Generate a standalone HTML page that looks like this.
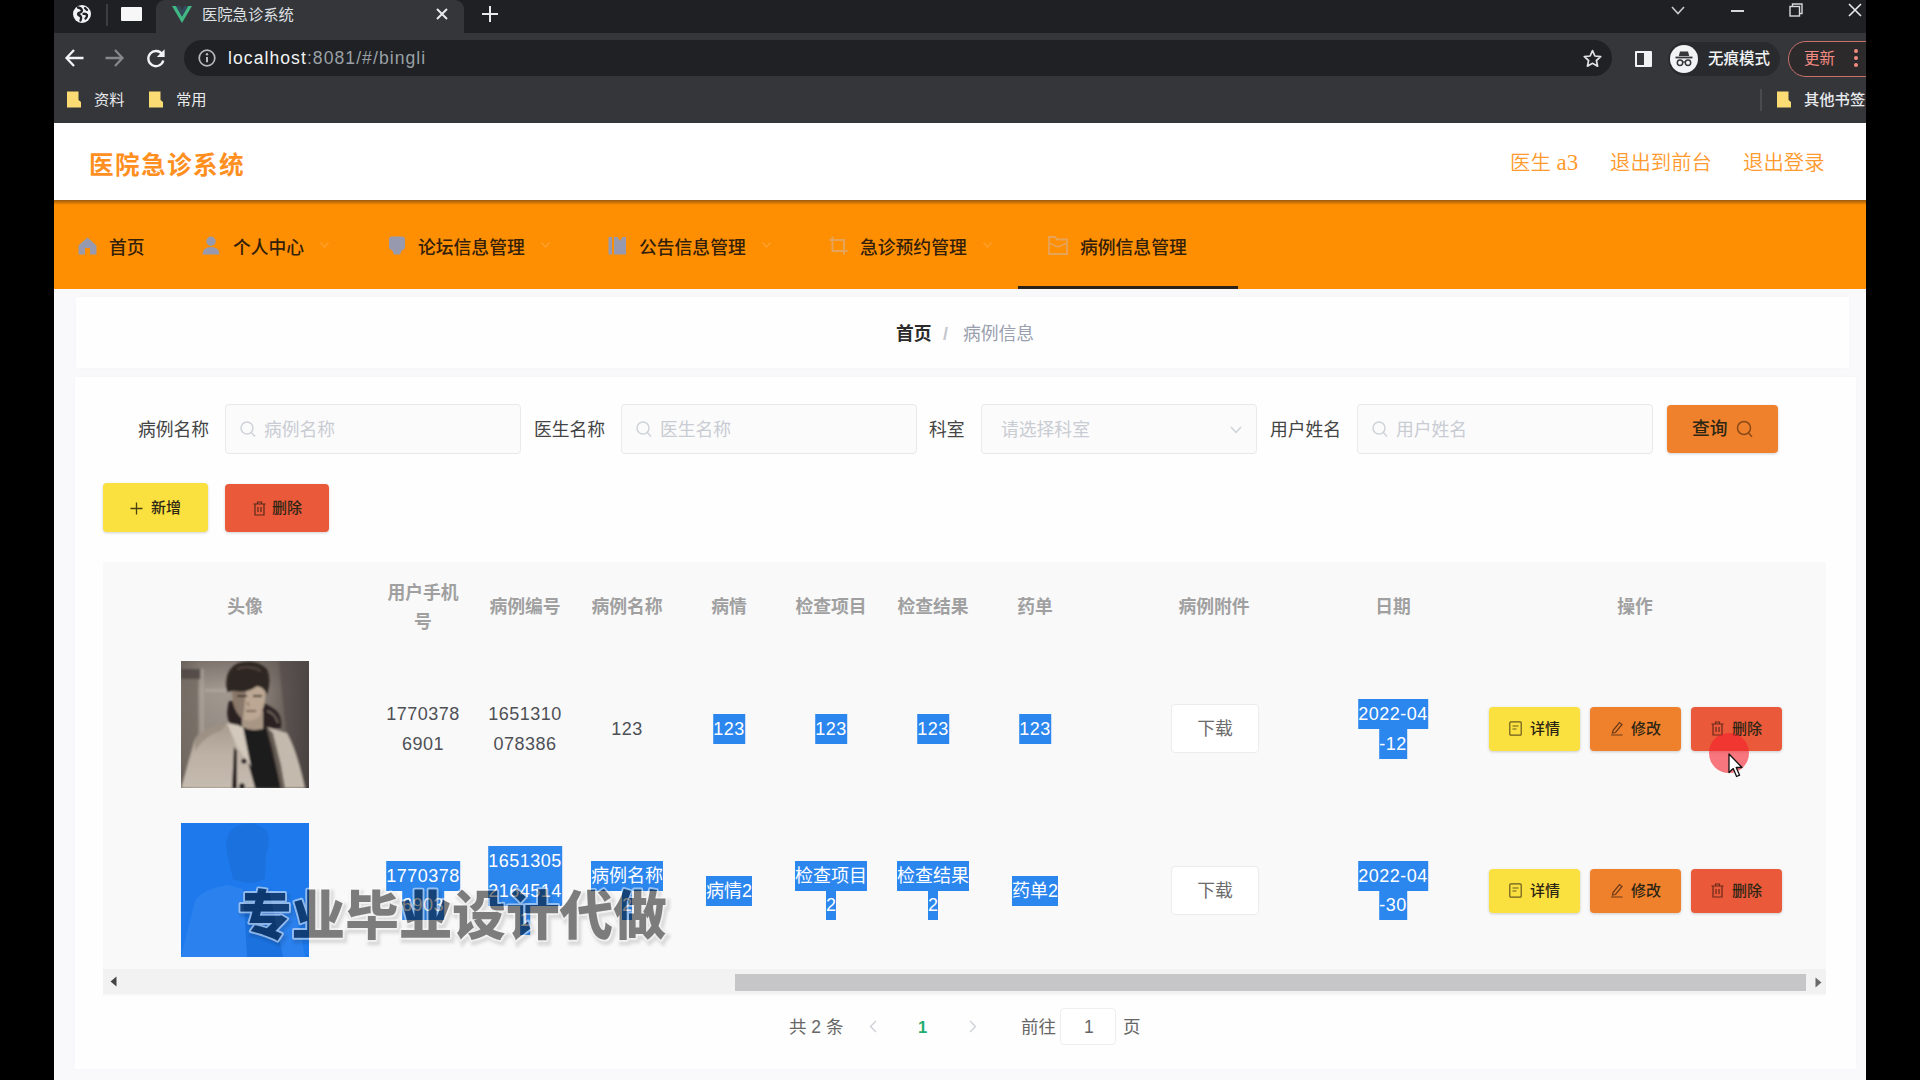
<!DOCTYPE html>
<html lang="zh-CN">
<head>
<meta charset="utf-8">
<title>医院急诊系统</title>
<style>
*{box-sizing:border-box;margin:0;padding:0}
html,body{width:1920px;height:1080px;overflow:hidden;background:#f9f9fb}
body{font-family:"Liberation Sans","Noto Sans CJK SC",sans-serif;position:relative;color:#333}
.a{position:absolute;white-space:nowrap}
.bar{position:absolute;top:0;width:54px;height:1080px;background:#000;z-index:50}
svg{position:absolute;overflow:visible}
/* browser chrome */
#tabstrip{position:absolute;left:0;top:0;width:1920px;height:34px;background:#1f2023}
#tab{position:absolute;left:156px;top:0;width:308px;height:34px;background:#35363a;border-radius:9px 9px 0 0}
#toolbar{position:absolute;left:0;top:33px;width:1920px;height:90px;background:#35363a}
#omni{position:absolute;left:184px;top:40px;width:1428px;height:36px;border-radius:18px;background:#202124}
.ct{color:#e8eaed;font-size:15.3px;line-height:20px}
/* app */
#hdr{position:absolute;left:0;top:123px;width:1920px;height:77px;background:#fff}
#nav{position:absolute;left:0;top:200px;width:1920px;height:89px;background:#ff8f02}
#navsh{position:absolute;left:0;top:200px;width:1920px;height:5px;background:linear-gradient(#9a5a10,rgba(255,140,0,0))}
.nv{position:absolute;top:202.5px;height:89px;line-height:90px;font-size:17.8px;color:#33200a;font-weight:500;white-space:nowrap}
.hl{position:absolute;top:146px;height:34px;line-height:34px;font-size:20.4px;color:#ff9a2e;font-weight:350;white-space:nowrap}
.card{position:absolute;background:#fefefe;box-shadow:0 0 6px rgba(0,0,0,.02)}
.lbl{position:absolute;top:405px;height:50px;line-height:50px;font-size:17.8px;color:#444;white-space:nowrap}
.inp{position:absolute;top:404px;height:50px;background:#fbfbfc;border:1px solid #e8e9ed;border-radius:4px;line-height:50px;font-size:17.8px;color:#c9ccd2;white-space:nowrap}
.btn{position:absolute;border-radius:4px;text-align:center;white-space:nowrap;color:#2e2614;font-weight:500}
.th{position:absolute;transform:translateX(-50%);text-align:center;font-size:17.8px;font-weight:bold;color:#a0a0a0;line-height:29px;white-space:nowrap}
.td{position:absolute;transform:translateX(-50%);text-align:center;font-size:18px;color:#4e5055;line-height:29.5px;white-space:nowrap}
.ab{width:91px;height:44px;line-height:44px;font-size:15px;text-align:left;padding-left:41px;box-shadow:0 1px 3px rgba(0,0,0,.18)}
.td span{display:inline-block;line-height:28.25px;padding-top:1px;padding-bottom:.8px;margin-bottom:-.8px;vertical-align:top}
.dg{letter-spacing:.5px}
.sel span{background:#2b86ee;color:#fff}
.pg{top:1012px;line-height:30px;font-size:17.5px;color:#666}
#wm{font-family:"Noto Sans CJK SC","Liberation Sans",sans-serif;font-weight:900;font-size:53.6px}
</style>
</head>
<body>
<!-- CHROME -->
<div id="tabstrip"></div>
<div id="toolbar"></div>
<div id="tab"></div>
<div id="omni"></div>
<!--CHROME-ITEMS-->
<!-- tab strip icons -->
<svg style="left:72px;top:4px" width="20" height="20" viewBox="0 0 20 20"><circle cx="10" cy="10" r="9" fill="#f1f3f4"/><path d="M6 3.500 Q9.500 4 10 6.500 Q9.500 8.500 7 8.800 Q5.500 9.500 6.500 11 Q9 11.500 9.200 14 L8.500 16.500 M11.500 9.800 Q14 9.500 15 11 Q15.500 13 13.500 14.500 M13 4 L15 6" stroke="#202124" stroke-width="2.300" fill="none" stroke-linecap="round"/></svg>
<div class="a" style="left:106px;top:4px;width:2px;height:22px;background:#3c3d41"></div>
<div class="a" style="left:121px;top:7px;width:21px;height:14px;background:#f7f7f7;border-radius:1px"></div>
<svg style="left:172px;top:6px" width="20" height="17" viewBox="0 0 20 17"><path d="M0 0 L10 17 L20 0 L16 0 L10 10.4 L4 0 Z" fill="#41b883"/><path d="M4 0 L10 10.4 L16 0 L12.3 0 L10 4 L7.7 0 Z" fill="#35495e"/></svg>
<div class="a ct" style="left:202px;top:5px;color:#dfe1e5;letter-spacing:0">医院急诊系统</div>
<svg style="left:436px;top:8px" width="12" height="12" viewBox="0 0 12 12"><path d="M1 1 L11 11 M11 1 L1 11" stroke="#e8eaed" stroke-width="2"/></svg>
<svg style="left:482px;top:6px" width="16" height="16" viewBox="0 0 16 16"><path d="M8 0 V16 M0 8 H16" stroke="#e8eaed" stroke-width="2"/></svg>
<!-- window controls -->
<svg style="left:1671px;top:6px" width="14" height="9" viewBox="0 0 14 9"><path d="M1 1 L7 7.5 L13 1" stroke="#c8cacd" stroke-width="1.6" fill="none"/></svg>
<div class="a" style="left:1731px;top:10px;width:13px;height:2px;background:#d5d7da"></div>
<svg style="left:1789px;top:3px" width="14" height="14" viewBox="0 0 14 14"><path d="M3.5 3.5 V1 H13 V10.5 H10.5" stroke="#d5d7da" stroke-width="1.4" fill="none"/><rect x="1" y="3.5" width="9.5" height="9.5" stroke="#d5d7da" stroke-width="1.4" fill="none"/></svg>
<svg style="left:1848px;top:3px" width="14" height="14" viewBox="0 0 14 14"><path d="M1 1 L13 13 M13 1 L1 13" stroke="#e8eaed" stroke-width="1.6"/></svg>
<!-- toolbar -->
<svg style="left:65px;top:49px" width="19" height="18" viewBox="0 0 19 18"><path d="M9 1 L1.5 9 L9 17 M1.5 9 H18.5" stroke="#f1f3f4" stroke-width="2.3" fill="none"/></svg>
<svg style="left:105px;top:49px" width="19" height="18" viewBox="0 0 19 18"><path d="M10 1 L17.5 9 L10 17 M17.5 9 H0.5" stroke="#85878b" stroke-width="2.3" fill="none"/></svg>
<svg style="left:146px;top:48px" width="20" height="20" viewBox="0 0 20 20"><path d="M16.2 6.2 A7.6 7.6 0 1 0 17.3 12.5" stroke="#f1f3f4" stroke-width="2.4" fill="none"/><path d="M18.6 1.2 V9 H10.8 Z" fill="#f1f3f4"/></svg>
<svg style="left:198px;top:49px" width="18" height="18" viewBox="0 0 18 18"><circle cx="9" cy="9" r="7.8" stroke="#b6b8bb" stroke-width="1.7" fill="none"/><path d="M9 8 V13.2" stroke="#b6b8bb" stroke-width="2"/><circle cx="9" cy="5.2" r="1.2" fill="#b6b8bb"/></svg>
<div class="a" style="left:228px;top:46px;font-size:17.6px;line-height:24px;color:#f1f3f4;letter-spacing:1.05px">localhost<span style="color:#9aa0a6">:8081/#/bingli</span></div>
<svg style="left:1583px;top:49px" width="19" height="19" viewBox="0 0 19 19"><path d="M9.5 1.6 L11.9 7 L17.7 7.6 L13.4 11.5 L14.6 17.2 L9.5 14.3 L4.4 17.2 L5.6 11.5 L1.3 7.6 L7.1 7 Z" stroke="#e0e2e5" stroke-width="1.7" fill="none" stroke-linejoin="round"/></svg>
<div class="a" style="left:1635px;top:51px;width:17px;height:16px;border:2px solid #f1f3f4;border-radius:1px;background:linear-gradient(90deg,#35363a 50%,#f1f3f4 50%)"></div>
<div class="a" style="left:1668px;top:42px;width:112px;height:34px;border-radius:17px;background:#292a2d"></div>
<div class="a" style="left:1670px;top:45px;width:28px;height:28px;border-radius:50%;background:#f1f3f4"></div>
<svg style="left:1675px;top:51px" width="18" height="16" viewBox="0 0 18 16"><path d="M5 0.5 H13 L14.2 5 H3.8 Z" fill="#35363a"/><rect x="0.5" y="5.6" width="17" height="1.8" fill="#35363a"/><circle cx="5" cy="11.7" r="2.7" stroke="#35363a" stroke-width="1.5" fill="none"/><circle cx="13" cy="11.7" r="2.7" stroke="#35363a" stroke-width="1.5" fill="none"/><path d="M7.5 11 H10.5" stroke="#35363a" stroke-width="1.3"/></svg>
<div class="a ct" style="left:1708px;top:49px;font-size:15.5px;font-weight:500;color:#f1f3f4">无痕模式</div>
<div class="a" style="left:1788px;top:41px;width:100px;height:36px;border:1.5px solid #c8716b;border-radius:18px;background:#2d2a2c"></div>
<div class="a ct" style="left:1804px;top:49px;font-size:15.5px;color:#f28b82">更新</div>
<div class="a" style="left:1854px;top:49px;width:4px;height:4px;border-radius:50%;background:#f28b82;box-shadow:0 7px 0 #f28b82,0 14px 0 #f28b82"></div>
<!-- bookmarks -->
<svg style="left:66px;top:91px" width="16" height="17" viewBox="0 0 16 17"><path d="M1 0.5 H12.5 V9 L15 11 V16.5 H1 Z" fill="#fbdc74"/></svg>
<div class="a ct" style="left:94px;top:90px">资料</div>
<svg style="left:148px;top:91px" width="16" height="17" viewBox="0 0 16 17"><path d="M1 0.5 H12.5 V9 L15 11 V16.5 H1 Z" fill="#fbdc74"/></svg>
<div class="a ct" style="left:176px;top:90px">常用</div>
<div class="a" style="left:1760px;top:89px;width:2px;height:22px;background:#4a4b4f"></div>
<svg style="left:1776px;top:91px" width="16" height="17" viewBox="0 0 16 17"><path d="M1 0.5 H12.5 V9 L15 11 V16.5 H1 Z" fill="#fbdc74"/></svg>
<div class="a ct" style="left:1804px;top:90px;font-weight:500">其他书签</div>
<!--/CHROME-ITEMS-->
<!-- APP -->
<div id="hdr"></div>
<div id="nav"></div>
<div id="navsh"></div>
<!--APP-ITEMS-->
<!-- header -->
<div class="a" style="left:89px;top:145.5px;font-size:24.6px;letter-spacing:1.4px;line-height:40px;font-weight:bold;color:#ff8f1f">医院急诊系统</div>
<div class="hl" style="left:1510px">医生 <span style="font-family:'Liberation Serif',serif;font-size:23px">a3</span></div>
<div class="hl" style="left:1610px">退出到前台</div>
<div class="hl" style="left:1743px">退出登录</div>
<!-- nav -->
<svg style="left:78px;top:237px" width="19" height="18" viewBox="0 0 19 18"><path d="M9.5 0.5 L18.5 8.5 V17.5 H12 V11 H7 V17.5 H0.5 V8.5 Z" fill="#9799ae"/></svg>
<div class="nv" style="left:109px">首页</div>
<svg style="left:202px;top:236px" width="18" height="19" viewBox="0 0 18 19"><circle cx="9" cy="5.2" r="4.7" fill="#9799ae"/><path d="M0.5 18.5 Q0.5 11 9 11 Q17.500 11 17.500 18.5 Z" fill="#9799ae"/></svg>
<div class="nv" style="left:233px">个人中心</div>
<svg style="left:388px;top:236px" width="18" height="19" viewBox="0 0 18 19"><rect x="1" y="0.5" width="16" height="13.5" rx="3" fill="#9799ae"/><path d="M4 14 H14 L12 18.500 H6 Z" fill="#9799ae"/></svg>
<div class="nv" style="left:418px">论坛信息管理</div>
<svg style="left:608px;top:236px" width="19" height="19" viewBox="0 0 19 19"><rect x="0.5" y="1" width="3.500" height="17.500" fill="#9799ae"/><path d="M6 1 H9.500 L12 5 L14.500 1 H18 V18.500 H6 Z" fill="#9799ae"/></svg>
<div class="nv" style="left:639px">公告信息管理</div>
<svg style="left:829px;top:236px" width="19" height="19" viewBox="0 0 19 19"><path d="M3.500 0.5 V15 H18.500 M0.5 4 H15 V18.500" stroke="#e6a45a" stroke-width="2" fill="none"/></svg>
<div class="nv" style="left:860px">急诊预约管理</div>
<svg style="left:1048px;top:236px" width="20" height="19" viewBox="0 0 20 19"><path d="M1 1 H7 L9 3.500 H19 V18 H1 Z" stroke="#e6a45a" stroke-width="1.8" fill="none"/><path d="M1 7 L10 11 L19 7" stroke="#e6a45a" stroke-width="1.500" fill="none"/></svg>
<div class="nv" style="left:1080px">病例信息管理</div>
<div class="a" style="left:1018px;top:286px;width:220px;height:3px;background:#2a2118"></div>
<svg style="left:320px;top:242px" width="9" height="6" viewBox="0 0 9 6"><path d="M0.5 0.5 L4.500 5 L8.500 0.5" stroke="rgba(255,205,150,.3)" stroke-width="1.200" fill="none"/></svg>
<svg style="left:541px;top:242px" width="9" height="6" viewBox="0 0 9 6"><path d="M0.5 0.5 L4.500 5 L8.500 0.5" stroke="rgba(255,205,150,.3)" stroke-width="1.200" fill="none"/></svg>
<svg style="left:762px;top:242px" width="9" height="6" viewBox="0 0 9 6"><path d="M0.5 0.5 L4.500 5 L8.500 0.5" stroke="rgba(255,205,150,.3)" stroke-width="1.200" fill="none"/></svg>
<svg style="left:983px;top:242px" width="9" height="6" viewBox="0 0 9 6"><path d="M0.5 0.5 L4.500 5 L8.500 0.5" stroke="rgba(255,205,150,.3)" stroke-width="1.200" fill="none"/></svg>
<!-- breadcrumb card -->
<div class="card" style="left:76px;top:297px;width:1773px;height:71px"></div>
<div class="a" style="left:896px;top:319px;font-size:17.8px;line-height:30px;font-weight:bold;color:#2b2b2b">首页</div>
<div class="a" style="left:943px;top:319px;font-size:17.8px;line-height:30px;color:#c3c6ce;font-weight:bold">/</div>
<div class="a" style="left:963px;top:319px;font-size:17.8px;line-height:30px;color:#9a9fae">病例信息</div>
<!-- main card -->
<div class="card" style="left:75px;top:377px;width:1781px;height:692px"></div>
<!-- search form -->
<div class="lbl" style="left:138px">病例名称</div>
<div class="inp" style="left:225px;width:296px"><svg style="left:14px;top:16px" width="16" height="17" viewBox="0 0 16 17"><circle cx="7" cy="7" r="6" stroke="#cfd2d8" stroke-width="1.500" fill="none"/><path d="M11.300 11.500 L15 15.500" stroke="#cfd2d8" stroke-width="1.500"/></svg><span style="margin-left:38px">病例名称</span></div>
<div class="lbl" style="left:534px">医生名称</div>
<div class="inp" style="left:621px;width:296px"><svg style="left:14px;top:16px" width="16" height="17" viewBox="0 0 16 17"><circle cx="7" cy="7" r="6" stroke="#cfd2d8" stroke-width="1.500" fill="none"/><path d="M11.300 11.500 L15 15.500" stroke="#cfd2d8" stroke-width="1.500"/></svg><span style="margin-left:38px">医生名称</span></div>
<div class="lbl" style="left:929px">科室</div>
<div class="inp" style="left:981px;width:276px"><span style="margin-left:19px">请选择科室</span><svg style="left:248px;top:21px" width="12" height="8" viewBox="0 0 12 8"><path d="M1 1 L6 6.500 L11 1" stroke="#cfd2d8" stroke-width="1.500" fill="none"/></svg></div>
<div class="lbl" style="left:1270px">用户姓名</div>
<div class="inp" style="left:1357px;width:296px"><svg style="left:14px;top:16px" width="16" height="17" viewBox="0 0 16 17"><circle cx="7" cy="7" r="6" stroke="#cfd2d8" stroke-width="1.500" fill="none"/><path d="M11.300 11.500 L15 15.500" stroke="#cfd2d8" stroke-width="1.500"/></svg><span style="margin-left:38px">用户姓名</span></div>
<div class="btn" style="left:1667px;top:405px;width:111px;height:48px;background:#f0812c;line-height:49px;font-size:17.8px;text-align:left;padding-left:25px;box-shadow:0 1px 3px rgba(0,0,0,.18)">查询<svg style="left:69px;top:15px" width="17" height="18" viewBox="0 0 17 18"><circle cx="8" cy="8" r="6.500" stroke="#8a4a18" stroke-width="1.500" fill="none"/><path d="M12.500 13 L16 16.800" stroke="#8a4a18" stroke-width="1.500"/></svg></div>
<!-- action buttons -->
<div class="btn" style="left:103px;top:483px;width:105px;height:49px;background:#fae13f;line-height:50px;font-size:15px;text-align:left;padding-left:48px;box-shadow:0 1px 3px rgba(0,0,0,.18)">新增<svg style="left:27px;top:19px" width="13" height="13" viewBox="0 0 13 13"><path d="M6.500 0.5 V12.500 M0.5 6.500 H12.500" stroke="#4a4010" stroke-width="1.300"/></svg></div>
<div class="btn" style="left:225px;top:484px;width:104px;height:48px;background:#e9593a;line-height:48px;font-size:15px;text-align:left;padding-left:47px;box-shadow:0 1px 3px rgba(0,0,0,.18)">删除<svg style="left:28px;top:17px" width="13" height="15" viewBox="0 0 13 15"><path d="M0.5 3 H12.500 M4.500 3 V1 H8.500 V3 M2 3 V14 H11 V3 M5 6 V11 M8 6 V11" stroke="#5a2a1a" stroke-width="1.200" fill="none"/></svg></div>
<!-- table -->
<div class="a" style="left:103px;top:562px;width:1723px;height:434px;background:#f9f9fa"></div>
<div class="th" style="left:245px;top:593.375px">头像</div>
<div class="th" style="left:423px;top:578.75px">用户手机<br>号</div>
<div class="th" style="left:525px;top:593.375px">病例编号</div>
<div class="th" style="left:627px;top:593.375px">病例名称</div>
<div class="th" style="left:729px;top:593.375px">病情</div>
<div class="th" style="left:831px;top:593.375px">检查项目</div>
<div class="th" style="left:933px;top:593.375px">检查结果</div>
<div class="th" style="left:1035px;top:593.375px">药单</div>
<div class="th" style="left:1214px;top:593.375px">病例附件</div>
<div class="th" style="left:1393px;top:593.375px">日期</div>
<div class="th" style="left:1635px;top:593.375px">操作</div>
<div class="td dg" style="left:423px;top:699.15px;"><span>1770378</span><br><span>6901</span></div>
<div class="td dg" style="left:525px;top:699.15px;"><span>1651310</span><br><span>078386</span></div>
<div class="td dg" style="left:627px;top:714.375px;"><span>123</span></div>
<div class="td sel dg" style="left:729px;top:714.375px;"><span>123</span></div>
<div class="td sel dg" style="left:831px;top:714.375px;"><span>123</span></div>
<div class="td sel dg" style="left:933px;top:714.375px;"><span>123</span></div>
<div class="td sel dg" style="left:1035px;top:714.375px;"><span>123</span></div>
<div class="td sel dg" style="left:1393px;top:699.15px;"><span>2022-04</span><br><span>-12</span></div>
<div class="td sel dg" style="left:423px;top:860.65px;"><span>1770378</span><br><span>6903</span></div>
<div class="td sel dg" style="left:525px;top:846.025px;"><span>1651305</span><br><span>2164514</span><br><span>1</span></div>
<div class="td sel" style="left:627px;top:860.65px;"><span>病例名称</span><br><span>2</span></div>
<div class="td sel" style="left:729px;top:875.875px;"><span>病情2</span></div>
<div class="td sel" style="left:831px;top:860.65px;"><span>检查项目</span><br><span>2</span></div>
<div class="td sel" style="left:933px;top:860.65px;"><span>检查结果</span><br><span>2</span></div>
<div class="td sel" style="left:1035px;top:875.875px;"><span>药单2</span></div>
<div class="td sel dg" style="left:1393px;top:860.65px;"><span>2022-04</span><br><span>-30</span></div>
<div class="btn" style="left:1171px;top:704px;width:88px;height:49px;background:#fff;border:1px solid #ebecf0;line-height:48px;font-size:17.8px;color:#6b6b6b;font-weight:400">下载</div>
<div class="btn ab" style="left:1489px;top:707px;background:#fae13f">详情<svg style="left:20px;top:14px" width="13" height="15" viewBox="0 0 13 15"><rect x="0.8" y="0.8" width="11.400" height="13.400" rx="1" stroke="#6a5a20" stroke-width="1.200" fill="none"/><path d="M3.500 5 H9.500 M3.500 8 H7.500" stroke="#6a5a20" stroke-width="1.200"/></svg></div>
<div class="btn ab" style="left:1590px;top:707px;background:#f0812c">修改<svg style="left:20px;top:14px" width="14" height="15" viewBox="0 0 14 15"><path d="M3 9.500 L9.500 1.500 L12 3.500 L5.500 11.500 L2.500 12 Z M1 14 H12.500" stroke="#6a3a18" stroke-width="1.200" fill="none"/></svg></div>
<div class="btn ab" style="left:1691px;top:707px;background:#e9593a">删除<svg style="left:20px;top:14px" width="13" height="15" viewBox="0 0 13 15"><path d="M0.5 3 H12.500 M4.500 3 V1 H8.500 V3 M2 3 V14 H11 V3 M5 6 V11 M8 6 V11" stroke="#6a2a1a" stroke-width="1.200" fill="none"/></svg></div>
<div class="btn" style="left:1171px;top:865.5px;width:88px;height:49px;background:#fff;border:1px solid #ebecf0;line-height:48px;font-size:17.8px;color:#6b6b6b;font-weight:400">下载</div>
<div class="btn ab" style="left:1489px;top:868.5px;background:#fae13f">详情<svg style="left:20px;top:14px" width="13" height="15" viewBox="0 0 13 15"><rect x="0.8" y="0.8" width="11.400" height="13.400" rx="1" stroke="#6a5a20" stroke-width="1.200" fill="none"/><path d="M3.500 5 H9.500 M3.500 8 H7.500" stroke="#6a5a20" stroke-width="1.200"/></svg></div>
<div class="btn ab" style="left:1590px;top:868.5px;background:#f0812c">修改<svg style="left:20px;top:14px" width="14" height="15" viewBox="0 0 14 15"><path d="M3 9.500 L9.500 1.500 L12 3.500 L5.500 11.500 L2.500 12 Z M1 14 H12.500" stroke="#6a3a18" stroke-width="1.200" fill="none"/></svg></div>
<div class="btn ab" style="left:1691px;top:868.5px;background:#e9593a">删除<svg style="left:20px;top:14px" width="13" height="15" viewBox="0 0 13 15"><path d="M0.5 3 H12.500 M4.500 3 V1 H8.500 V3 M2 3 V14 H11 V3 M5 6 V11 M8 6 V11" stroke="#6a2a1a" stroke-width="1.200" fill="none"/></svg></div>
<!-- photos -->
<svg style="left:181px;top:661px" width="128" height="127" viewBox="0 0 128 127">
<defs>
<linearGradient id="pbg" x1="0" y1="0" x2="1" y2="0"><stop offset="0" stop-color="#7a716a"/><stop offset="0.16" stop-color="#9d948c"/><stop offset="0.42" stop-color="#a39a92"/><stop offset="0.7" stop-color="#7f766f"/><stop offset="1" stop-color="#4c4542"/></linearGradient>
<linearGradient id="pbg2" x1="0" y1="0" x2="0" y2="1"><stop offset="0" stop-color="#5a524d" stop-opacity=".5"/><stop offset="0.22" stop-color="#5a524d" stop-opacity="0"/><stop offset="1" stop-color="#3a3432" stop-opacity=".3"/></linearGradient>
<linearGradient id="pct" x1="0" y1="0" x2="0" y2="1"><stop offset="0" stop-color="#a89c90"/><stop offset="0.5" stop-color="#bdb1a5"/><stop offset="1" stop-color="#c6bbaf"/></linearGradient>
<filter id="pbl" x="-5%" y="-5%" width="110%" height="110%"><feGaussianBlur stdDeviation="1.2"/></filter>
<clipPath id="pcl"><rect width="128" height="127"/></clipPath>
</defs>
<g clip-path="url(#pcl)">
<rect width="128" height="127" fill="url(#pbg)"/>
<rect width="128" height="127" fill="url(#pbg2)"/>
<g filter="url(#pbl)">
<rect x="0" y="8" width="20" height="10" fill="#4e4642" opacity=".85"/>
<rect x="1" y="18" width="16" height="86" fill="#736a63" opacity=".8"/>
<rect x="19" y="8" width="4" height="119" fill="#b0a79e" opacity=".55"/>
<rect x="24" y="28" width="24" height="3" fill="#b8afa6" opacity=".5"/>
<path d="M98 0 H128 V127 H114 Q104 70 98 0Z" fill="#4a4340" opacity=".5"/>
<path d="M48 40 Q43 58 52 67 L70 71 L100 67 Q102 52 90 46 L80 40Z" fill="#2b2421"/>
<path d="M86 50 Q94 52 97 62" stroke="#6a5e56" stroke-width="2" fill="none"/>
<path d="M61 50 H82 V69 H61Z" fill="#a89685"/>
<path d="M51 27 Q50 48 62 58 Q70 62 78 56 Q86 44 84 25Z" fill="#bba793"/>
<path d="M51 27 Q50 48 62 58 L65 30Z" fill="#7e6d60" opacity=".8"/>
<path d="M56 35 H66 M72 35 H81" stroke="#3a2e28" stroke-width="1.800"/>
<path d="M66 41 L68 45" stroke="#8a7466" stroke-width="1.500"/>
<path d="M65 50 H75" stroke="#6a5448" stroke-width="1.600"/>
<path d="M46 31 Q42 8 58 2 Q74 -3 86 8 Q91 18 86 34 Q83 26 76 25 Q66 33 53 30 Q48 30 46 31Z" fill="#2e2623"/>
<path d="M56 8 Q68 3 80 10" stroke="#5a4c44" stroke-width="2.500" fill="none" opacity=".7"/>
<path d="M62 66 Q72 72 88 66 L104 127 H66Z" fill="#1f1a1a"/>
<path d="M0 127 L14 78 Q22 66 46 62 L58 64 L66 98 L74 127Z" fill="url(#pct)"/>
<path d="M46 62 L62 66 L70 106 L56 86Z" fill="#d2c8bc"/>
<path d="M14 78 Q22 66 46 62 L40 70 Q24 74 14 90Z" fill="#988c80" opacity=".8"/>
<path d="M53 86 L51 127 H56 L56 90Z" fill="#2a2321"/>
<path d="M86 66 L106 72 Q116 90 124 127 H100 L92 88Z" fill="#c4b9ad"/>
<path d="M84 64 L92 72 L100 104 L104 127 H100 L88 80Z" fill="#4a403a" opacity=".75"/>
<circle cx="63" cy="100" r="2.600" fill="#241e1c"/>
<circle cx="61" cy="125" r="2.800" fill="#241e1c"/>
</g>
</g>
</svg>
<svg style="left:181px;top:823px" width="128" height="134" viewBox="0 0 128 134"><rect width="128" height="134" fill="#1e7aec"/><g opacity=".1"><path d="M46 30 Q42 8 58 2 Q74 -3 86 8 Q90 18 85 32 L84 56 Q70 64 52 56Z" fill="#0a2a6a"/><path d="M0 134 L14 78 Q22 66 46 62 L62 66 L74 134Z M86 66 L106 72 Q116 90 124 134 H100Z" fill="#9cc4ff"/><path d="M62 66 Q72 72 88 66 L102 134 H66Z" fill="#0a2a6a"/></g></svg>
<!-- scrollbar -->
<div class="a" style="left:103px;top:969px;width:1723px;height:25px;background:#f2f2f3"></div>
<div class="a" style="left:735px;top:974px;width:1071px;height:17px;background:#c6c5c8"></div>
<svg style="left:110px;top:976px" width="7" height="11" viewBox="0 0 7 11"><path d="M6.500 0.5 V10.500 L0.5 5.500Z" fill="#444"/></svg>
<svg style="left:1815px;top:977px" width="7" height="11" viewBox="0 0 7 11"><path d="M0.5 0.5 V10.500 L6.500 5.500Z" fill="#6a6a6a"/></svg>
<!-- pagination -->
<div class="a pg" style="left:789px">共 2 条</div>
<svg style="left:869px;top:1020px" width="8" height="13" viewBox="0 0 8 13"><path d="M7 1 L1.500 6.500 L7 12" stroke="#cdd0d6" stroke-width="1.400" fill="none"/></svg>
<div class="a pg" style="left:918px;font-weight:bold;color:#1fae6e;font-size:16.5px">1</div>
<svg style="left:969px;top:1020px" width="8" height="13" viewBox="0 0 8 13"><path d="M1 1 L6.500 6.500 L1 12" stroke="#cdd0d6" stroke-width="1.400" fill="none"/></svg>
<div class="a pg" style="left:1021px">前往</div>
<div class="a" style="left:1060px;top:1008px;width:56px;height:37px;border:1px solid #eceef2;border-radius:4px;background:#fff"></div>
<div class="a pg" style="left:1084px">1</div>
<div class="a pg" style="left:1123px">页</div>
<!-- watermark -->
<svg id="wm" style="left:228px;top:870px" width="460" height="90" viewBox="0 0 460 90">
<defs><mask id="wmm" maskUnits="userSpaceOnUse" x="0" y="0" width="460" height="90"><rect width="460" height="90" fill="#fff"/><text x="10" y="65" fill="#000">专业毕业设计代做</text></mask>
<filter id="wms" x="-5%" y="-20%" width="110%" height="140%"><feGaussianBlur stdDeviation="1.6"/></filter></defs>
<text x="12" y="68" fill="none" stroke="rgba(0,0,0,.12)" stroke-width="5" filter="url(#wms)" mask="url(#wmm)">专业毕业设计代做</text>
<text x="10" y="65" fill="none" stroke="rgba(255,255,255,.5)" stroke-width="3.800" stroke-linejoin="round" mask="url(#wmm)">专业毕业设计代做</text>
<text x="10" y="65" fill="rgba(0,0,0,.5)">专业毕业设计代做</text>
</svg>
<!-- cursor -->
<div class="a" style="left:1709px;top:733px;width:40px;height:40px;border-radius:50%;background:rgba(246,30,42,.6)"></div>
<svg style="left:1728px;top:753px" width="16" height="25" viewBox="0 0 16 25"><path d="M1 1 V19.500 L5.200 15.600 L8.600 23.500 L11.600 22.200 L8.200 14.500 L14 14.500Z" fill="#fff" stroke="#111" stroke-width="1.300" stroke-linejoin="round"/></svg>
<!--/APP-ITEMS-->
<div class="bar" style="left:0"></div>
<div class="bar" style="left:1866px"></div>
</body>
</html>
